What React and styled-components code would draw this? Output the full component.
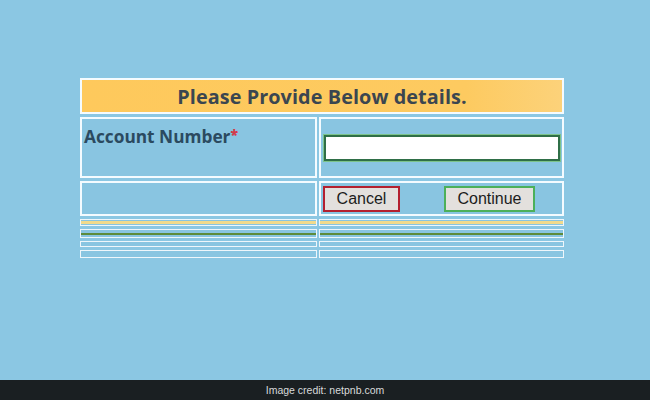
import React from "react";
import styled, { createGlobalStyle } from "styled-components";

const Global = createGlobalStyle`
  html, body {
    margin: 0;
    padding: 0;
    background: #8bc7e3;
  }
`;

const Page = styled.div`
  width: 650px;
  height: 400px;
  display: flex;
  flex-direction: column;
  background: #8bc7e3;
  font-family: "Open Sans", "Liberation Sans", sans-serif;
`;

const Main = styled.div`
  flex: 1;
  padding: 77px 0 0 79px;
`;

const Table = styled.div`
  width: 486px;
  display: grid;
  grid-template-columns: 237px 245px;
  column-gap: 2px;
  row-gap: 3px;
  padding: 1px;
  box-sizing: border-box;
`;

const Cell = styled.div`
  box-sizing: border-box;
  border: 2px solid #f4fbff;
  height: ${(p) => p.h}px;
  background: ${(p) => p.bg || "#89c5e1"};
  grid-column: ${(p) => (p.span ? "1 / span 2" : "auto")};
  display: flex;
  align-items: ${(p) => p.align || "center"};
  padding: ${(p) => p.pad || "0"};
`;

const Header = styled(Cell)`
  justify-content: center;
  background: linear-gradient(to right, #fec95c 0%, #fdca60 80%, #fcd27a 100%);
  color: #3b4650;
  font-weight: 700;
  font-size: 19.8px;
  letter-spacing: 0.1px;
`;

const Label = styled.span`
  font-weight: 700;
  font-size: 17.3px;
  color: #2b4a60;
  line-height: 1;
  b {
    color: #d23b4a;
    font-size: 14px;
    vertical-align: top;
  }
`;

const Input = styled.input`
  box-sizing: border-box;
  width: 236px;
  height: 26px;
  border: 2px solid #2f6f47;
  outline: 1px solid #7cc38a;
  background: #ffffff;
`;

const Buttons = styled.div`
  display: flex;
  gap: 44px;
`;

const Button = styled.button`
  box-sizing: border-box;
  height: 26px;
  width: ${(p) => p.w}px;
  border: 2px solid ${(p) => p.edge};
  background: #e3e0dd;
  font-family: "Liberation Sans", Arial, sans-serif;
  font-size: 16px;
  color: #1c1c1c;
  padding: 0;
`;

const Thin = styled(Cell)`
  border-width: 1px;
  border-color: #eef6fb;
  padding: 0;
`;

const Fill = styled.div`
  width: 100%;
  height: ${(p) => p.h}px;
  background: ${(p) => p.c};
`;

const Credit = styled.div`
  height: 20px;
  background: #1a1f22;
  color: #d8dadb;
  font-family: "Liberation Sans", Arial, sans-serif;
  font-size: 10.5px;
  display: flex;
  align-items: center;
  justify-content: center;
`;

const thinRows = [
  { h: 7, fill: "#f1da8c", fh: 3 },
  { h: 9, fill: "#5d8b3b", fh: 2 },
  { h: 6, fill: "#89c5e1", fh: 2 },
  { h: 8, fill: "#89c5e1", fh: 3 },
];

export default function App() {
  return (
    <Page>
      <Global />
      <Main>
        <Table>
          <Header span h={36}>
            Please Provide Below details.
          </Header>
          <Cell h={61} align="flex-start" pad="9px 0 0 2px">
            <Label>
              Account Number<b>*</b>
            </Label>
          </Cell>
          <Cell h={61} pad="0 0 0 3px">
            <Input />
          </Cell>
          <Cell h={35} />
          <Cell h={35} pad="0 0 0 2px">
            <Buttons>
              <Button w={77} edge="#b3202f">
                Cancel
              </Button>
              <Button w={91} edge="#4cb05a">
                Continue
              </Button>
            </Buttons>
          </Cell>
          {thinRows.map((r, i) => (
            <React.Fragment key={i}>
              <Thin h={r.h}>
                <Fill h={r.fh} c={r.fill} />
              </Thin>
              <Thin h={r.h}>
                <Fill h={r.fh} c={r.fill} />
              </Thin>
            </React.Fragment>
          ))}
        </Table>
      </Main>
      <Credit>Image credit: netpnb.com</Credit>
    </Page>
  );
}
